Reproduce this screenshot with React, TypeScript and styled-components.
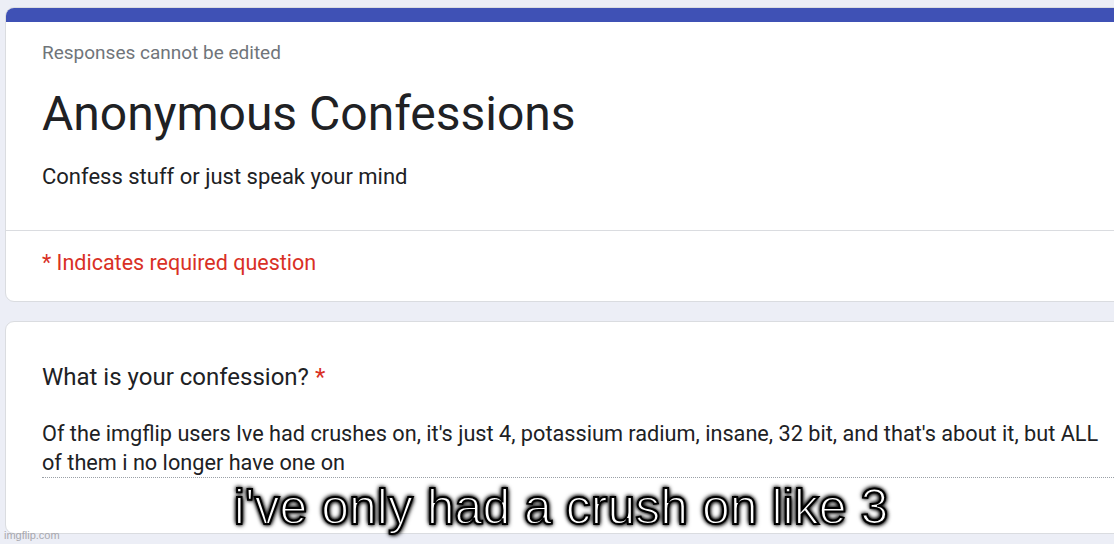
import React from 'react';
import styled, { createGlobalStyle } from 'styled-components';

const GlobalStyle = createGlobalStyle`
  html, body {
    margin: 0;
    padding: 0;
    background: #eceef6;
    overflow: hidden;
  }
  body {
    font-family: Roboto, "Liberation Sans", Arial, sans-serif;
  }
`;

const Page = styled.div`
  position: relative;
  width: 1114px;
  height: 544px;
  overflow: hidden;
  padding: 7px 0 0 5px;
  box-sizing: border-box;
  display: flex;
  flex-direction: column;
  gap: 19px;
`;

const Card = styled.section`
  width: calc(100% + 30px);
  background: #ffffff;
  border: 1px solid #dadce0;
  border-radius: 9px;
  overflow: hidden;
  box-sizing: border-box;
  flex-shrink: 0;
`;

const Stripe = styled.div`
  height: 15px;
  margin: -1px -1px 0;
  background: #3f51b5;
`;

const Header = styled.div`
  padding: 19px 36px 39px;
  border-bottom: 1px solid #dadce0;
`;

const Notice = styled.div`
  font-size: 19px;
  line-height: 24px;
  color: #70757a;
`;

const Title = styled.h1`
  margin: 19px 0 0;
  font-size: 48px;
  line-height: 60px;
  font-weight: 400;
  color: #202124;
`;

const Description = styled.p`
  margin: 19px 0 0;
  font-size: 22px;
  line-height: 28px;
  color: #202124;
`;

const Required = styled.div`
  padding: 19px 36px 25px;
  font-size: 21.5px;
  line-height: 26px;
  color: #d93025;
`;

const Question = styled.div`
  padding: 40px 36px 55px;
`;

const QuestionTitle = styled.div`
  font-size: 24px;
  line-height: 30px;
  color: #202124;
`;

const Star = styled.span`
  color: #d93025;
`;

const Answer = styled.div`
  margin-top: 27px;
  width: 1072px;
  font-size: 21.7px;
  line-height: 29px;
  color: #202124;
  border-bottom: 1px dotted #9aa0a6;
  box-sizing: border-box;
`;

const Caption = styled.div`
  position: absolute;
  left: 0;
  right: 0;
  top: 478px;
  text-align: center;
  font-family: "Liberation Sans", Arial, sans-serif;
  font-size: 50px;
  line-height: 58px;
  color: #ffffff;
  -webkit-text-stroke: 2px #000;
  text-shadow: 0 0 3px #000, 0 0 4px #000, 1px 1px 5px #000, -1px -1px 5px #000;
  padding-left: 8px;
`;

const Watermark = styled.div`
  position: absolute;
  left: 4px;
  bottom: 3px;
  font-family: "Liberation Sans", Arial, sans-serif;
  font-size: 11px;
  color: #a8a8ae;
`;

const App = () => (
  <>
    <GlobalStyle />
    <Page>
      <Card>
        <Stripe />
        <Header>
          <Notice>Responses cannot be edited</Notice>
          <Title>Anonymous Confessions</Title>
          <Description>Confess stuff or just speak your mind</Description>
        </Header>
        <Required>* Indicates required question</Required>
      </Card>
      <Card>
        <Question>
          <QuestionTitle>
            What is your confession? <Star>*</Star>
          </QuestionTitle>
          <Answer>
            Of the imgflip users Ive had crushes on, it's just 4, potassium radium, insane, 32 bit, and that's about it, but ALL of them i no longer have one on
          </Answer>
        </Question>
      </Card>
      <Caption>i've only had a crush on like 3</Caption>
      <Watermark>imgflip.com</Watermark>
    </Page>
  </>
);

export default App;
